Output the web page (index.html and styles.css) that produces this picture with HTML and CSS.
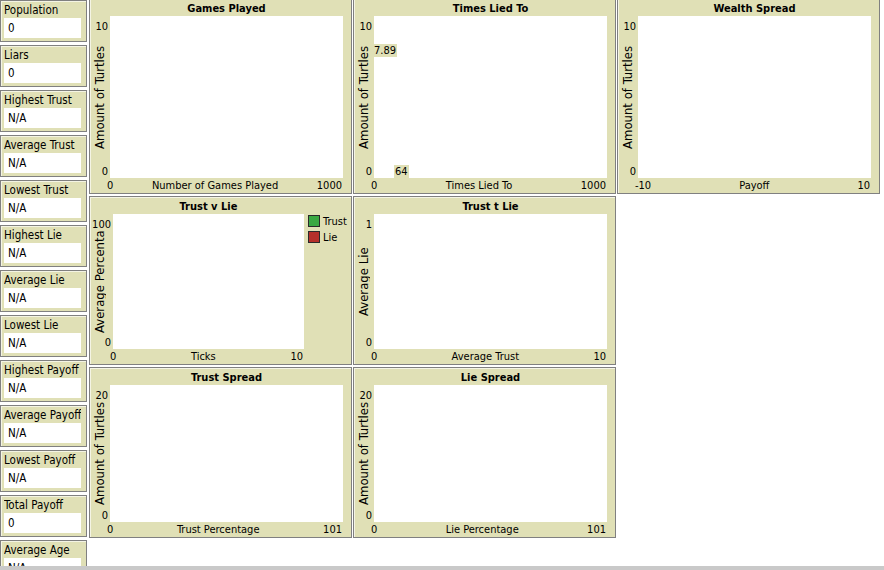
FILE: index.html
```html
<!DOCTYPE html>
<html>
<head>
<meta charset="utf-8">
<link rel="stylesheet" href="styles.css">
</head>
<body>
<div class="app">
  <div class="monitors">
    <div class="monitor"><div class="m-label">Population</div><div class="m-value">0</div></div>
    <div class="monitor"><div class="m-label">Liars</div><div class="m-value">0</div></div>
    <div class="monitor"><div class="m-label">Highest Trust</div><div class="m-value">N/A</div></div>
    <div class="monitor"><div class="m-label">Average Trust</div><div class="m-value">N/A</div></div>
    <div class="monitor"><div class="m-label">Lowest Trust</div><div class="m-value">N/A</div></div>
    <div class="monitor"><div class="m-label">Highest Lie</div><div class="m-value">N/A</div></div>
    <div class="monitor"><div class="m-label">Average Lie</div><div class="m-value">N/A</div></div>
    <div class="monitor"><div class="m-label">Lowest Lie</div><div class="m-value">N/A</div></div>
    <div class="monitor"><div class="m-label">Highest Payoff</div><div class="m-value">N/A</div></div>
    <div class="monitor"><div class="m-label">Average Payoff</div><div class="m-value">N/A</div></div>
    <div class="monitor"><div class="m-label">Lowest Payoff</div><div class="m-value">N/A</div></div>
    <div class="monitor"><div class="m-label">Total Payoff</div><div class="m-value">0</div></div>
    <div class="monitor"><div class="m-label">Average Age</div><div class="m-value">N/A</div></div>
  </div>

  <div class="plots">
    <div class="plot">
      <div class="p-title">Games Played</div>
      <div class="p-yaxis"><span class="tick">10</span><span class="ylabel">Amount of Turtles</span><span class="tick">0</span></div>
      <div class="p-canvas"></div>
      <div class="p-xaxis"><span class="xmin">0</span><span class="xlabel">Number of Games Played</span><span class="xmax">1000</span></div>
    </div>

    <div class="plot">
      <div class="p-title">Times Lied To</div>
      <div class="p-yaxis"><span class="tick">10</span><span class="ylabel">Amount of Turtles</span><span class="tick">0</span></div>
      <div class="p-canvas">
        <span class="point-label pl-top">7.89</span>
        <span class="point-label pl-bottom">64</span>
      </div>
      <div class="p-xaxis"><span class="xmin">0</span><span class="xlabel">Times Lied To</span><span class="xmax">1000</span></div>
    </div>

    <div class="plot">
      <div class="p-title">Wealth Spread</div>
      <div class="p-yaxis"><span class="tick">10</span><span class="ylabel">Amount of Turtles</span><span class="tick">0</span></div>
      <div class="p-canvas"></div>
      <div class="p-xaxis"><span class="xmin">-10</span><span class="xlabel">Payoff</span><span class="xmax">10</span></div>
    </div>

    <div class="plot plot-legend">
      <div class="p-title">Trust v Lie</div>
      <div class="p-yaxis"><span class="tick">100</span><span class="ylabel">Average Percentage</span><span class="tick">0</span></div>
      <div class="p-canvas"></div>
      <div class="p-legend">
        <div class="lg-item"><span class="sw sw-green"></span>Trust</div>
        <div class="lg-item"><span class="sw sw-red"></span>Lie</div>
      </div>
      <div class="p-xaxis"><span class="xmin">0</span><span class="xlabel">Ticks</span><span class="xmax">10</span></div>
    </div>

    <div class="plot">
      <div class="p-title">Trust t Lie</div>
      <div class="p-yaxis"><span class="tick">1</span><span class="ylabel">Average Lie</span><span class="tick">0</span></div>
      <div class="p-canvas"></div>
      <div class="p-xaxis"><span class="xmin">0</span><span class="xlabel">Average Trust</span><span class="xmax">10</span></div>
    </div>

    <div class="empty"></div>

    <div class="plot">
      <div class="p-title">Trust Spread</div>
      <div class="p-yaxis"><span class="tick">20</span><span class="ylabel">Amount of Turtles</span><span class="tick">0</span></div>
      <div class="p-canvas"></div>
      <div class="p-xaxis"><span class="xmin">0</span><span class="xlabel">Trust Percentage</span><span class="xmax">101</span></div>
    </div>

    <div class="plot">
      <div class="p-title">Lie Spread</div>
      <div class="p-yaxis"><span class="tick">20</span><span class="ylabel">Amount of Turtles</span><span class="tick">0</span></div>
      <div class="p-canvas"></div>
      <div class="p-xaxis"><span class="xmin">0</span><span class="xlabel">Lie Percentage</span><span class="xmax">101</span></div>
    </div>
  </div>
</div>
<div class="bottom-bar"></div>
</body>
</html>
```
FILE: styles.css
```css
* { box-sizing: border-box; }

html, body {
  margin: 0;
  padding: 0;
  background: #ffffff;
  overflow: hidden;
}

body {
  font-family: "DejaVu Sans Condensed", "DejaVu Sans", "Liberation Sans", sans-serif;
  font-size: 11px;
  color: #000000;
  width: 884px;
  height: 570px;
}

.app {
  display: flex;
  height: 566px;
  overflow: hidden;
}

.bottom-bar {
  height: 4px;
  background: #c9c9c9;
}

/* ---------- monitors ---------- */
.monitors {
  width: 87px;
  display: flex;
  flex-direction: column;
  gap: 3px;
  flex-shrink: 0;
}

.monitor {
  height: 42px;
  flex-shrink: 0;
  background: #e0e0b6;
  border: 1px solid #808080;
  box-shadow: inset 1px 1px 0 #f4f4e4;
  padding: 2px 5px 0 3px;
}

.m-label {
  height: 14px;
  line-height: 14px;
  font-size: 11.5px;
  white-space: nowrap;
  overflow: hidden;
}

.m-value {
  margin-top: 1px;
  height: 20px;
  line-height: 20px;
  font-size: 11.5px;
  background: #ffffff;
  padding-left: 4px;
}

/* ---------- plots ---------- */
.plots {
  margin-left: 2px;
  margin-top: -2px;
  display: grid;
  grid-template-columns: repeat(3, 263px);
  grid-template-rows: 196px 169px 171px;
  column-gap: 1px;
  row-gap: 2px;
  align-content: start;
}

.plot {
  background: #e0e0b6;
  border: 1px solid #808080;
  box-shadow: inset 1px 1px 0 #f4f4e4;
  display: grid;
  grid-template-columns: 20px 1fr 8px;
  grid-template-rows: 17px 1fr 15px;
}

.plot-legend {
  grid-template-columns: 23px 1fr 47px;
}

.p-title {
  grid-column: 2;
  grid-row: 1;
  font-weight: bold;
  text-align: center;
  padding-top: 2px;
  line-height: 15px;
  white-space: nowrap;
}

.p-yaxis {
  grid-column: 1;
  grid-row: 2;
  display: grid;
  grid-template-rows: auto 1fr auto;
  padding: 5px 2px 1px 0;
  min-height: 0;
  overflow: hidden;
}

.tick {
  justify-self: end;
  line-height: 11px;
}

.ylabel {
  justify-self: start;
  margin-left: 3px;
  margin-bottom: 4px;
  writing-mode: vertical-rl;
  transform: rotate(180deg);
  text-align: center;
  white-space: nowrap;
  overflow: hidden;
  font-size: 13px;
  line-height: 13px;
  min-height: 0;
}

.p-canvas {
  grid-column: 2;
  grid-row: 2;
  background: #ffffff;
  position: relative;
}

.p-legend {
  grid-column: 3;
  grid-row: 1 / 3;
  padding: 18px 0 0 4px;
  display: flex;
  flex-direction: column;
  gap: 4px;
}

.lg-item {
  display: flex;
  align-items: center;
  gap: 3px;
  line-height: 11px;
}

.sw {
  width: 12px;
  height: 12px;
  border: 1px solid #2a2a2a;
  display: inline-block;
}

.sw-green { background: #3aa843; }
.sw-red { background: #b5302a; }

.p-xaxis {
  grid-column: 2;
  grid-row: 3;
  display: flex;
  line-height: 15px;
  white-space: nowrap;
  margin-left: -3px;
  padding-right: 1px;
}

.xlabel {
  flex: 1;
  text-align: center;
}

.point-label {
  position: absolute;
  background: #e0e0b6;
  line-height: 13px;
  padding: 0 1px;
}

.pl-top {
  left: -1px;
  top: 28px;
}

.pl-bottom {
  left: 20px;
  bottom: 0;
}
```
